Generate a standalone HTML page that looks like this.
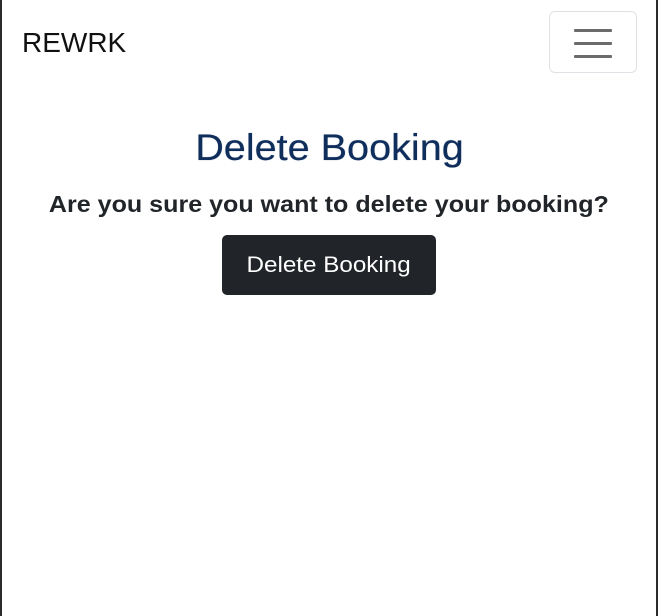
<!DOCTYPE html>
<html><head><meta charset="utf-8"><style>
html,body{margin:0;padding:0;background:#fff;}
body{width:658px;height:616px;position:relative;overflow:hidden;font-family:"Liberation Sans",Arial,sans-serif;color:#212529;}
.bl{position:absolute;left:0;top:0;width:2px;height:616px;background:#2b2b2b;}
.br{position:absolute;left:656px;top:0;width:2px;height:616px;background:#2b2b2b;}
.brand{position:absolute;left:22px;top:25px;font-size:28px;line-height:36px;color:#111;}
.tog{position:absolute;left:549px;top:11px;width:88px;height:62px;border:1px solid #dee2e6;border-radius:6px;box-sizing:border-box;}
.tog i{position:absolute;left:24px;width:38px;height:3px;background:#6b6b6b;border-radius:1px;}
.c{position:absolute;left:0;right:0;margin:0;text-align:center;}
.c span{display:inline-block;}
h1{top:126px;font-weight:normal;font-size:37px;line-height:44px;color:#0f2e5c;}
h1 span{transform:scaleX(1.07);text-shadow:0 0 0.6px #0f2e5c;}
p{top:189px;font-weight:bold;font-size:23px;line-height:30px;}
p span{transform:scaleX(1.09);}
.btn{position:absolute;left:222px;top:235px;width:214px;height:60px;background:#212529;border-radius:5px;color:#fff;font-size:22px;line-height:60px;text-align:center;}
.btn span{display:inline-block;transform:scaleX(1.1);}
</style></head><body>
<div class="bl"></div><div class="br"></div>
<div class="brand">REWRK</div>
<div class="tog"><i style="top:17px"></i><i style="top:30px"></i><i style="top:43px"></i></div>
<h1 class="c"><span>Delete Booking</span></h1>
<p class="c"><span>Are you sure you want to delete your booking?</span></p>
<div class="btn"><span>Delete Booking</span></div>
</body></html>
